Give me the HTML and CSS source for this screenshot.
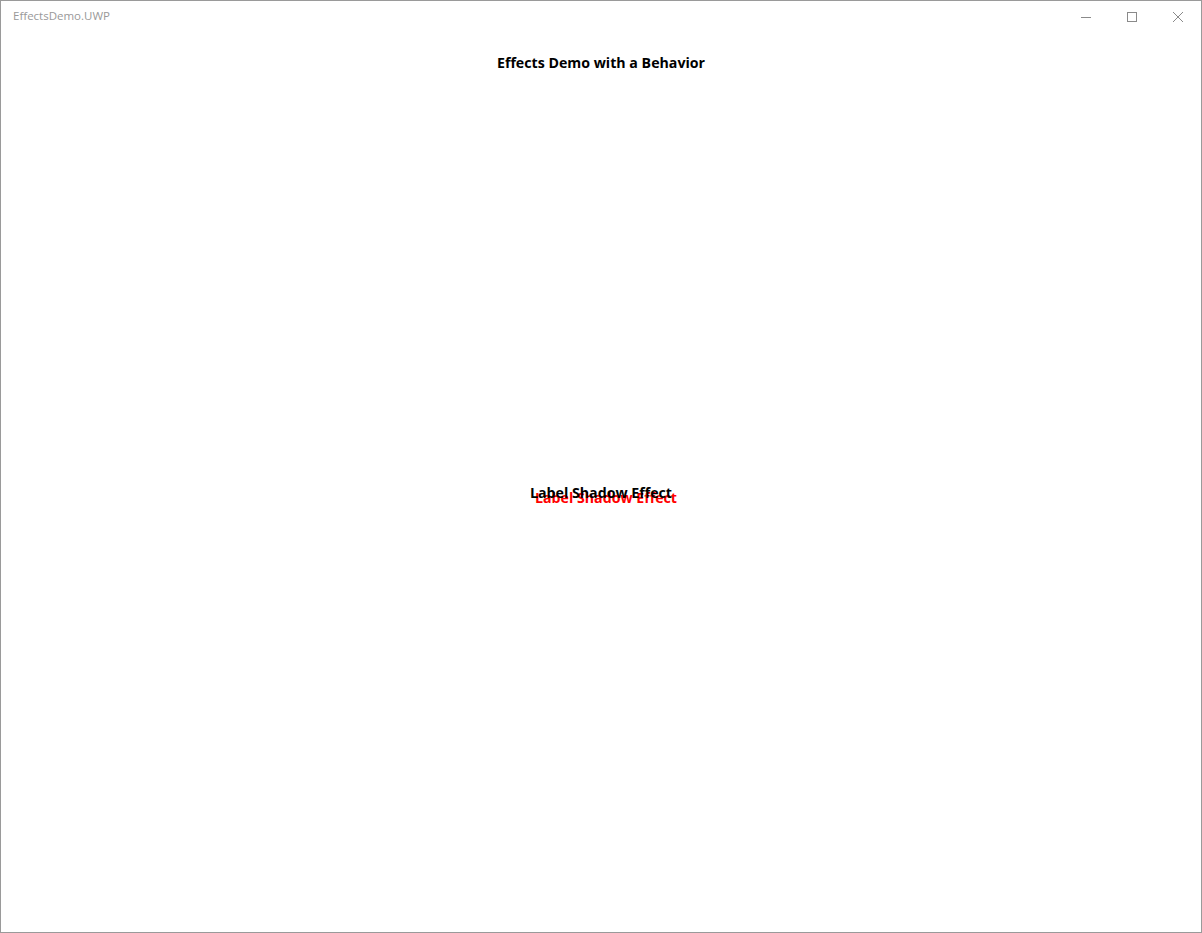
FILE: index.html
```html
<!DOCTYPE html>
<html>
<head>
<meta charset="utf-8">
<link rel="stylesheet" href="styles.css">
</head>
<body>
<div class="window">
  <div class="titlebar">
    <div class="title">EffectsDemo.UWP</div>
    <div class="controls">
      <div class="ctl">
        <svg width="10" height="10" viewBox="0 0 10 10"><path d="M0 5.5 H10" stroke="#8a8a8a" stroke-width="1"/></svg>
      </div>
      <div class="ctl">
        <svg width="10" height="10" viewBox="0 0 10 10"><rect x="0.5" y="0.5" width="9" height="9" fill="none" stroke="#8a8a8a" stroke-width="1"/></svg>
      </div>
      <div class="ctl">
        <svg width="10" height="10" viewBox="0 0 10 10"><path d="M0 0 L10 10 M10 0 L0 10" stroke="#8a8a8a" stroke-width="1"/></svg>
      </div>
    </div>
  </div>
  <div class="content">
    <div class="heading">Effects Demo with a Behavior</div>
    <div class="center">
      <div class="label">
        <span class="shadow">Label Shadow Effect</span>
        <span class="text">Label Shadow Effect</span>
      </div>
    </div>
  </div>
</div>
</body>
</html>
```

FILE: styles.css
```css
html, body {
  margin: 0;
  padding: 0;
  background: #ffffff;
}
.window {
  width: 1202px;
  height: 933px;
  box-sizing: border-box;
  border: 1px solid #9a9a9a;
  background: #ffffff;
  display: flex;
  flex-direction: column;
  font-family: "Open Sans", "Noto Sans", sans-serif;
}
.titlebar {
  height: 31px;
  display: flex;
  align-items: center;
  justify-content: space-between;
  flex: none;
}
.title {
  padding-left: 12px;
  font-size: 11.5px;
  color: #999999;
  margin-top: -2px;
}
.controls {
  display: flex;
  height: 31px;
  align-self: flex-start;
}
.ctl {
  width: 46px;
  height: 31px;
  display: flex;
  align-items: center;
  justify-content: center;
}
.content {
  flex: 1;
  display: flex;
  flex-direction: column;
  align-items: center;
}
.heading {
  margin-top: 20px;
  font-size: 14.2px;
  font-weight: bold;
  color: #000;
  line-height: 21px;
}
.center {
  flex: 1;
  display: flex;
  align-items: center;
  justify-content: center;
  padding-bottom: 20px;
}
.label {
  position: relative;
  font-size: 14.2px;
  font-weight: bold;
  line-height: 20px;
}
.label .shadow {
  position: absolute;
  left: 5px;
  top: 5px;
  color: #ff0000;
  white-space: nowrap;
}
.label .text {
  position: relative;
  color: #000;
  white-space: nowrap;
}
```
